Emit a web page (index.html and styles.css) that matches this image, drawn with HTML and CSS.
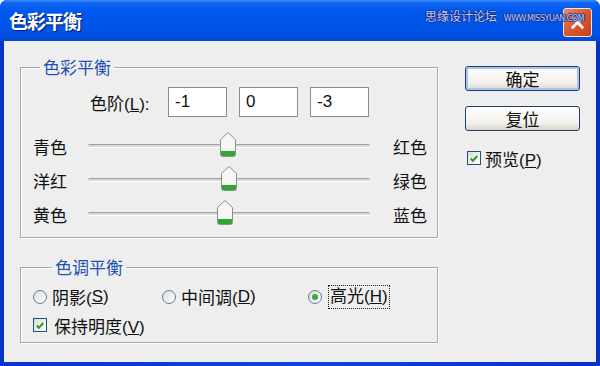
FILE: index.html
```html
<!DOCTYPE html>
<html lang="zh-CN">
<head>
  <meta charset="UTF-8" />
  <title>色彩平衡</title>
  <link rel="stylesheet" href="styles.css">
</head>
<body>
  <div class="window">
    <div class="titlebar">
      <span class="title">色彩平衡</span>
      <span class="watermark"><span class="wm-cn">思缘设计论坛</span> <span class="wm-url">WWW.MISSYUAN.COM</span></span>
      <span class="close">
        <svg width="29" height="29" viewBox="0 0 29 29">
          <path d="M9.5 9.5 L19.5 19.5 M19.5 9.5 L9.5 19.5" stroke="#fff" stroke-width="3" stroke-linecap="square" fill="none"/>
        </svg>
      </span>
    </div>

    <div class="client">
      <div class="groups">
        <fieldset class="group group-color">
          <legend>色彩平衡</legend>
          <div class="levels">
            <span class="levels-label">色阶(<u>L</u>):</span>
            <span class="field">-1</span>
            <span class="field">0</span>
            <span class="field">-3</span>
          </div>

          <div class="sliders">
            <div class="slider-row">
              <span class="side-label">青色</span>
              <div class="track"><span class="thumb" style="left: 49.5%"></span></div>
              <span class="end-label">红色</span>
            </div>
            <div class="slider-row">
              <span class="side-label">洋红</span>
              <div class="track"><span class="thumb" style="left: 50%"></span></div>
              <span class="end-label">绿色</span>
            </div>
            <div class="slider-row">
              <span class="side-label">黄色</span>
              <div class="track"><span class="thumb" style="left: 48.5%"></span></div>
              <span class="end-label">蓝色</span>
            </div>
          </div>
        </fieldset>

        <fieldset class="group group-tone">
          <legend>色调平衡</legend>
          <div class="radio-row">
            <span class="option"><span class="radio"></span>阴影(<u>S</u>)</span>
            <span class="option"><span class="radio"></span>中间调(<u>D</u>)</span>
            <span class="option"><span class="radio checked"></span><span class="focus">高光(<u>H</u>)</span></span>
          </div>
          <div class="check-row tone-check">
            <span class="box">
              <svg width="13" height="13" viewBox="0 0 13 13"><path d="M3 6.5 L5.3 9 L10 3.8" stroke="#21a121" stroke-width="2.2" fill="none"/></svg>
            </span>
            <span>保持明度(<u>V</u>)</span>
          </div>
        </fieldset>
      </div>

      <div class="side">
        <div class="btn btn-default">确定</div>
        <div class="btn">复位</div>
        <div class="check-row preview-check">
          <span class="box">
            <svg width="13" height="13" viewBox="0 0 13 13"><path d="M3 6.5 L5.3 9 L10 3.8" stroke="#21a121" stroke-width="2.2" fill="none"/></svg>
          </span>
          <span>预览(<u>P</u>)</span>
        </div>
      </div>
    </div>
  </div>
</body>
</html>
```

FILE: styles.css
```css
body {
  margin: 0;
  font-family: "Liberation Sans", "Noto Sans CJK SC", sans-serif;
  font-size: 17px;
  color: #111;
}
.window {
  width: 600px;
  height: 366px;
  background: linear-gradient(to right, #0836c8, #0a46e0 50%, #0632c4);
  display: flex;
  flex-direction: column;
  border-radius: 7px 7px 0 0;
  overflow: hidden;
}

/* title bar */
.titlebar {
  position: relative;
  flex: none;
  height: 41px;
  display: flex;
  align-items: center;
  padding: 0 8px 0 9px;
  background: linear-gradient(#3b8df9 0, #0d63f2 3px, #0058ee 12px, #0055e8 28px, #0049d8 41px);
}
.title {
  color: #fff;
  font-family: "Noto Sans CJK SC", sans-serif;
  font-weight: bold;
  font-size: 19px;
  letter-spacing: -1px;
  text-shadow: 1px 1px 1px #0a1870;
}
.watermark {
  position: absolute;
  left: 425px;
  top: 6px;
  white-space: nowrap;
  color: #b9cdfd;
  text-shadow: -1px 0 #1a2f8a, 1px 0 #1a2f8a, 0 -1px #1a2f8a, 0 1px #1a2f8a;
}
.wm-cn {
  font-family: "Noto Sans CJK SC", sans-serif;
  font-size: 12px;
}
.wm-url {
  font-family: "DejaVu Sans", sans-serif;
  font-size: 8px;
  letter-spacing: -0.5px;
  margin-left: 2px;
}
.close {
  margin-left: auto;
  margin-top: 3px;
  width: 29px;
  height: 29px;
  box-sizing: border-box;
  border: 1px solid #f3e3dc;
  border-radius: 3px;
  background: linear-gradient(135deg, #ee8a63, #dc5a32 45%, #c5401a);
  display: flex;
  align-items: center;
  justify-content: center;
}
.close svg {
  display: block;
}

/* client area */
.client {
  flex: 1;
  margin: 0 4px 4px;
  background: #eeeeee;
  display: flex;
  padding: 17px 0 0 16px;
}
.groups {
  width: 418px;
}
.group {
  margin: 0;
  padding: 0;
  border: 1px solid #a9a9a9;
  box-shadow: inset 1px 1px 0 #fff, 1px 1px 0 #fff;
  min-width: 0;
}
.group legend {
  margin-left: 19px;
  padding: 0 3px;
  line-height: 18px;
  color: #1d50b0;
  font-family: "Noto Sans CJK SC", sans-serif;
}
.group-tone {
  margin-top: 20px;
  padding: 8px 0 5px 12px;
}
.group-color {
  padding-bottom: 6px;
}

/* levels */
.levels {
  display: flex;
  align-items: center;
  margin-top: 11px;
  padding-left: 69px;
  height: 30px;
}
.levels-label {
  width: 78px;
}
.field {
  width: 59px;
  height: 30px;
  box-sizing: border-box;
  border: 1px solid #8c8c8c;
  background: #fff;
  padding-left: 6px;
  line-height: 28px;
  margin-right: 12px;
}

/* sliders */
.sliders {
  margin-top: 12px;
}
.slider-row {
  display: flex;
  align-items: center;
  height: 34px;
  padding: 0 9px 0 12px;
}
.side-label {
  width: 55px;
  flex: none;
}
.end-label {
  margin-left: 23px;
  width: 35px;
}
.track {
  position: relative;
  flex: 1;
  height: 2px;
  background: #dadada;
  border-top: 1px solid #9e9e9e;
  border-bottom: 1px solid #fff;
  border-radius: 2px;
}
.thumb {
  position: absolute;
  top: -13px;
  width: 16px;
  height: 25px;
  margin-left: -8px;
  background: url("data:image/svg+xml,%3Csvg xmlns='http://www.w3.org/2000/svg' width='16' height='25'%3E%3Cpath d='M8 0.5 L15.5 7.5 V22.5 Q15.5 24.5 13.5 24.5 H2.5 Q0.5 24.5 0.5 22.5 V7.5 Z' fill='%23f6f6f2' stroke='%23859585'/%3E%3Cpath d='M1 19 H15 V22.5 Q15 24 13.5 24 H2.5 Q1 24 1 22.5 Z' fill='%2334a534'/%3E%3C/svg%3E") no-repeat;
}

/* radios and checkboxes */
.radio-row {
  display: grid;
  grid-template-columns: 129px 146px auto;
  height: 24px;
  align-items: center;
}
.option {
  display: flex;
  align-items: center;
}
.radio {
  width: 14px;
  height: 14px;
  box-sizing: border-box;
  border: 1px solid #5d7d9c;
  border-radius: 50%;
  background: linear-gradient(135deg, #dcdcd6, #fff);
  margin-right: 5px;
  display: flex;
  align-items: center;
  justify-content: center;
}
.radio.checked::after {
  content: "";
  width: 6px;
  height: 6px;
  border-radius: 50%;
  background: #3aaa3a;
}
.focus {
  border: 1px dotted #222;
  padding: 0 1px;
  line-height: 22px;
  margin-left: 1px;
}
.check-row {
  display: flex;
  align-items: center;
  height: 24px;
}
.tone-check {
  margin-top: 5px;
}
.box {
  width: 14px;
  height: 14px;
  box-sizing: border-box;
  border: 1px solid #1c5180;
  background: linear-gradient(135deg, #dcdcd6, #fff);
  margin-right: 7px;
  display: flex;
}
.preview-check {
  margin-top: 15px;
  padding-left: 2px;
}
.preview-check .box {
  margin-right: 4px;
}

/* buttons */
.side {
  margin-left: 27px;
  margin-top: 8px;
  display: flex;
  flex-direction: column;
}
.btn {
  width: 115px;
  height: 25px;
  box-sizing: border-box;
  border: 1px solid #22406e;
  border-radius: 3px;
  background: linear-gradient(#ffffff, #f2f1ec 70%, #d8d3c8);
  text-align: center;
  line-height: 23px;
  font-family: "Noto Sans CJK SC", sans-serif;
}
.btn-default {
  box-shadow: inset 0 0 0 2px #a9c2ef;
}
.btn + .btn {
  margin-top: 15px;
}
```
